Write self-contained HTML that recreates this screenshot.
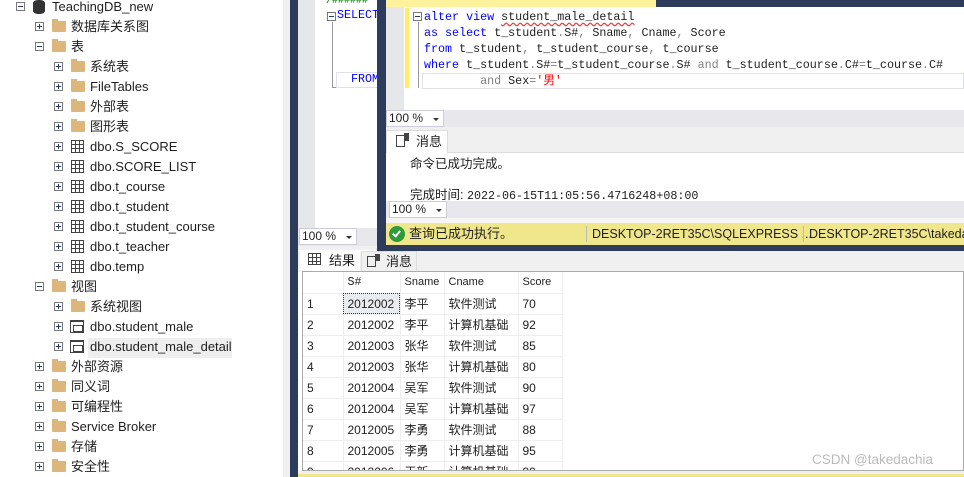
<!DOCTYPE html>
<html><head><meta charset="utf-8"><style>
*{margin:0;padding:0;box-sizing:border-box}
body{width:964px;height:477px;overflow:hidden;position:relative;background:#fff;font-family:"Liberation Sans","Noto Sans CJK SC",sans-serif;font-size:13px;color:#1e1e1e}
.a{position:absolute;white-space:nowrap}
.row{position:absolute;height:20px;line-height:20px;white-space:nowrap}
.exp{position:absolute;width:9px;height:9px;border:1px solid #7a7a7a;top:5px;background:#fff}
.exp:before{content:"";position:absolute;left:1px;top:3px;width:5px;height:1px;background:#2a3a6a}
.exp.p:after{content:"";position:absolute;left:3px;top:1px;width:1px;height:5px;background:#2a3a6a}
.fold{position:absolute;top:4px;width:14px;height:11px;background:#dcb67a;border-radius:1px}
.fold:before{content:"";position:absolute;left:0;top:-2px;width:6px;height:3px;background:#dcb67a}
.tbl{position:absolute;top:3px;width:13px;height:13px;border:1px solid #424242;background:
linear-gradient(#424242,#424242) 0 3px/100% 1px no-repeat,
linear-gradient(#424242,#424242) 0 7px/100% 1px no-repeat,
linear-gradient(#424242,#424242) 3px 0/1px 100% no-repeat,
linear-gradient(#424242,#424242) 7px 0/1px 100% no-repeat,#fff}
.vw{position:absolute;top:3px;width:14px;height:13px;border:1px solid #424242;border-top-width:2px;background:#fff}
.vw:after{content:"";position:absolute;left:2px;top:3px;width:8px;height:5px;border:1px solid #424242}
.mono{font-family:"Liberation Mono","Noto Sans CJK SC",monospace;font-size:11.7px;white-space:pre}
.k{color:#0000ff}.g{color:#808080}.r{color:#ff0000}
.combo{position:absolute;height:17px;border:1px solid #ccd;background:#fff;font-size:12px;line-height:15px;padding-left:2px}
.combo:after{content:"";position:absolute;right:4px;top:7px;border:3px solid transparent;border-top:3px solid #333}
td{border-right:1px solid #eee;border-bottom:1px solid #eee;height:21px;font-size:12px;padding-left:4px;white-space:nowrap}
</style></head><body>
<div class="a" style="left:283px;top:0;width:7px;height:477px;background:#f0f0f0"></div>
<div class="row" style="top:-3px;left:0">
<div class="exp" style="left:16px"></div>
<div class="a" style="left:33px;top:3px;width:12px;height:14px;background:#333;border-radius:5px/3px"></div>
<span class="a" style="left:52px">TeachingDB_new</span></div>
<div class="row" style="top:17px"><div class="exp p" style="left:35px"></div><div class="fold" style="left:52px"></div><span class="a" style="left:71px">数据库关系图</span></div>
<div class="row" style="top:37px"><div class="exp" style="left:35px"></div><div class="fold" style="left:52px"></div><span class="a" style="left:71px">表</span></div>
<div class="row" style="top:57px"><div class="exp p" style="left:54px"></div><div class="fold" style="left:71px"></div><span class="a" style="left:90px">系统表</span></div>
<div class="row" style="top:77px"><div class="exp p" style="left:54px"></div><div class="fold" style="left:71px"></div><span class="a" style="left:90px">FileTables</span></div>
<div class="row" style="top:97px"><div class="exp p" style="left:54px"></div><div class="fold" style="left:71px"></div><span class="a" style="left:90px">外部表</span></div>
<div class="row" style="top:117px"><div class="exp p" style="left:54px"></div><div class="fold" style="left:71px"></div><span class="a" style="left:90px">图形表</span></div>
<div class="row" style="top:137px"><div class="exp p" style="left:54px"></div><div class="tbl" style="left:71px"></div><span class="a" style="left:90px">dbo.S_SCORE</span></div>
<div class="row" style="top:157px"><div class="exp p" style="left:54px"></div><div class="tbl" style="left:71px"></div><span class="a" style="left:90px">dbo.SCORE_LIST</span></div>
<div class="row" style="top:177px"><div class="exp p" style="left:54px"></div><div class="tbl" style="left:71px"></div><span class="a" style="left:90px">dbo.t_course</span></div>
<div class="row" style="top:197px"><div class="exp p" style="left:54px"></div><div class="tbl" style="left:71px"></div><span class="a" style="left:90px">dbo.t_student</span></div>
<div class="row" style="top:217px"><div class="exp p" style="left:54px"></div><div class="tbl" style="left:71px"></div><span class="a" style="left:90px">dbo.t_student_course</span></div>
<div class="row" style="top:237px"><div class="exp p" style="left:54px"></div><div class="tbl" style="left:71px"></div><span class="a" style="left:90px">dbo.t_teacher</span></div>
<div class="row" style="top:257px"><div class="exp p" style="left:54px"></div><div class="tbl" style="left:71px"></div><span class="a" style="left:90px">dbo.temp</span></div>
<div class="row" style="top:277px"><div class="exp" style="left:35px"></div><div class="fold" style="left:52px"></div><span class="a" style="left:71px">视图</span></div>
<div class="row" style="top:297px"><div class="exp p" style="left:54px"></div><div class="fold" style="left:71px"></div><span class="a" style="left:90px">系统视图</span></div>
<div class="row" style="top:317px"><div class="exp p" style="left:54px"></div><div class="vw" style="left:70px"></div><span class="a" style="left:90px">dbo.student_male</span></div>
<div class="a" style="left:88px;top:338px;width:144px;height:20px;background:#eeeeee"></div>
<div class="row" style="top:337px"><div class="exp p" style="left:54px"></div><div class="vw" style="left:70px"></div><span class="a" style="left:90px">dbo.student_male_detail</span></div>
<div class="row" style="top:357px"><div class="exp p" style="left:35px"></div><div class="fold" style="left:52px"></div><span class="a" style="left:71px">外部资源</span></div>
<div class="row" style="top:377px"><div class="exp p" style="left:35px"></div><div class="fold" style="left:52px"></div><span class="a" style="left:71px">同义词</span></div>
<div class="row" style="top:397px"><div class="exp p" style="left:35px"></div><div class="fold" style="left:52px"></div><span class="a" style="left:71px">可编程性</span></div>
<div class="row" style="top:417px"><div class="exp p" style="left:35px"></div><div class="fold" style="left:52px"></div><span class="a" style="left:71px">Service Broker</span></div>
<div class="row" style="top:437px"><div class="exp p" style="left:35px"></div><div class="fold" style="left:52px"></div><span class="a" style="left:71px">存储</span></div>
<div class="row" style="top:457px"><div class="exp p" style="left:35px"></div><div class="fold" style="left:52px"></div><span class="a" style="left:71px">安全性</span></div>

<div class="a" style="left:290px;top:0;width:8px;height:477px;background:#2d3c5a"></div>
<div class="a" style="left:298px;top:0;width:80px;height:228px;background:#fff"></div>
<div class="a" style="left:298px;top:0;width:17px;height:228px;background:#e6e7e8"></div>
<div class="a mono" style="left:326px;top:0;color:#008000;font-size:10px;line-height:4px">/######</div>
<div class="exp" style="left:327px;top:12px;position:absolute"></div>
<div class="a mono k" style="left:337px;top:8px">SELECT</div>
<div class="a" style="left:332px;top:22px;width:1px;height:66px;background:#999"></div>
<div class="a" style="left:332px;top:87px;width:5px;height:1px;background:#999"></div>
<div class="a" style="left:336px;top:72px;width:42px;height:16px;border:1px solid #e0e0e8"></div>
<div class="a mono k" style="left:351px;top:72px">FROM</div>
<div class="a" style="left:298px;top:228px;width:80px;height:18px;background:#e8e8ec"></div>
<div class="combo" style="left:299px;top:228px;width:58px">100 %</div>
<div class="a" style="left:298px;top:246px;width:80px;height:4px;background:#f0f0f0"></div>

<div class="a" style="left:377px;top:0;width:587px;height:251px;background:#2d3c5a"></div>
<div class="a" style="left:386px;top:0;width:270px;height:7px;background:#fff29d"></div>
<div class="a" style="left:386px;top:7px;width:578px;height:103px;background:#fff"></div>
<div class="a" style="left:386px;top:7px;width:18px;height:103px;background:#e6e7e8"></div>
<div class="a" style="left:405px;top:8px;width:4px;height:80px;background:#ffee62"></div>
<div class="exp" style="left:413px;top:12px;position:absolute"></div>
<div class="a" style="left:418px;top:22px;width:1px;height:66px;background:#999"></div>
<div class="a" style="left:422px;top:73px;width:542px;height:16px;border:1px solid #e0e0e8"></div>
<div class="a mono" style="left:424px;top:9px;line-height:16px"><span class="k">alter view</span> <span style="text-decoration:underline wavy #e33;text-underline-offset:2px">student_male_detail</span>
<span class="k">as select</span> t_student<span class="g">.</span>S#<span class="g">,</span> Sname<span class="g">,</span> Cname<span class="g">,</span> Score
<span class="k">from</span> t_student<span class="g">,</span> t_student_course<span class="g">,</span> t_course
<span class="k">where</span> t_student<span class="g">.</span>S#<span class="g">=</span>t_student_course<span class="g">.</span>S# <span class="g">and</span> t_student_course<span class="g">.</span>C#<span class="g">=</span>t_course<span class="g">.</span>C#
        <span class="g">and</span> Sex<span class="g">=</span><span class="r">'男'</span></div>
<div class="a" style="left:386px;top:110px;width:578px;height:17px;background:#e8e8ec"></div>
<div class="combo" style="left:386px;top:110px;width:58px">100 %</div>
<div class="a" style="left:386px;top:127px;width:578px;height:26px;background:#f0f0f0;border-bottom:1px solid #ddd"></div>
<div class="a" style="left:386px;top:130px;width:62px;height:23px;background:#fff;border:1px solid #ddd;border-bottom:none;line-height:22px;padding-left:29px;font-size:13px">消息</div>
<div class="a" style="left:396px;top:135px;width:9px;height:12px;border:1px solid #444"></div>
<div class="a" style="left:404px;top:133px;width:5px;height:8px;background:#444"></div>
<div class="a" style="left:386px;top:153px;width:578px;height:48px;background:#fff"></div>
<div class="a" style="left:410px;top:153px;font-size:12.5px">命令已成功完成。</div>
<div class="a" style="left:410px;top:184px;font-size:12.5px">完成时间: <span class="mono" style="font-size:11.7px">2022-06-15T11:05:56.4716248+08:00</span></div>
<div class="a" style="left:386px;top:201px;width:578px;height:17px;background:#e8e8ec"></div>
<div class="combo" style="left:389px;top:201px;width:58px">100 %</div>
<div class="a" style="left:386px;top:218px;width:578px;height:5px;background:#f5f5f5"></div>
<div class="a" style="left:386px;top:223px;width:578px;height:22px;background:#f0e68c;overflow:hidden">
<div class="a" style="left:3px;top:3px;width:16px;height:16px;border-radius:50%;background:#2e9a3a"></div>
<div class="a" style="left:8px;top:6px;width:5px;height:8px;border-right:2px solid #fff;border-bottom:2px solid #fff;transform:rotate(40deg)"></div>
<div class="a" style="left:23px;top:2px;line-height:18px">查询已成功执行。</div>
<div class="a" style="left:200px;top:3px;width:1px;height:16px;background:#bbb"></div>
<div class="a" style="left:206px;top:2px;line-height:18px;font-size:12.5px">DESKTOP-2RET35C\SQLEXPRESS ...</div>
<div class="a" style="left:417px;top:3px;width:1px;height:16px;background:#bbb"></div>
<div class="a" style="left:423px;top:2px;line-height:18px;font-size:12.5px">DESKTOP-2RET35C\takedachia</div>
</div>

<div class="a" style="left:298px;top:251px;width:666px;height:21px;background:#f0f0f0"></div>
<div class="a" style="left:300px;top:251px;width:60px;height:21px;background:#fff;line-height:20px;padding-left:29px">结果</div>
<div class="tbl" style="left:308px;top:253px;width:13px;height:12px"></div>
<div class="a" style="left:361px;top:251px;width:56px;height:21px;background:#f0f0f0;border:1px solid #ddd;line-height:19px;padding-left:24px">消息</div>
<div class="a" style="left:367px;top:256px;width:9px;height:11px;border:1px solid #444"></div>
<div class="a" style="left:375px;top:254px;width:5px;height:7px;background:#444"></div>
<div class="a" style="left:302px;top:271px;width:662px;height:200px;border:1px solid #aaa;background:#fff;overflow:hidden">
<table style="border-collapse:collapse;font-family:'Liberation Sans','Noto Sans CJK SC',sans-serif">
<tr><td style="width:40px"></td><td style="width:57px" class="mono">S#</td><td style="width:44px;font-size:11px">Sname</td><td style="width:74px;font-size:11px">Cname</td><td style="width:44px;font-size:11px">Score</td></tr>
<tr><td>1</td><td style="background:#e8ecf0;outline:1px dotted #333;outline-offset:-1px">2012002</td><td>李平</td><td>软件测试</td><td>70</td></tr>
<tr><td>2</td><td>2012002</td><td>李平</td><td>计算机基础</td><td>92</td></tr>
<tr><td>3</td><td>2012003</td><td>张华</td><td>软件测试</td><td>85</td></tr>
<tr><td>4</td><td>2012003</td><td>张华</td><td>计算机基础</td><td>80</td></tr>
<tr><td>5</td><td>2012004</td><td>吴军</td><td>软件测试</td><td>90</td></tr>
<tr><td>6</td><td>2012004</td><td>吴军</td><td>计算机基础</td><td>97</td></tr>
<tr><td>7</td><td>2012005</td><td>李勇</td><td>软件测试</td><td>88</td></tr>
<tr><td>8</td><td>2012005</td><td>李勇</td><td>计算机基础</td><td>95</td></tr>
<tr><td>9</td><td>2012006</td><td>王新</td><td>计算机基础</td><td>90</td></tr>
</table></div>
<div class="a" style="left:298px;top:471px;width:666px;height:6px;background:#f0f0f0"></div>
<div class="a" style="left:298px;top:474px;width:666px;height:3px;background:#f0e68c"></div>
<div class="a" style="left:812px;top:452px;color:#bbb;font-size:13.5px">CSDN @takedachia</div>
</body></html>
